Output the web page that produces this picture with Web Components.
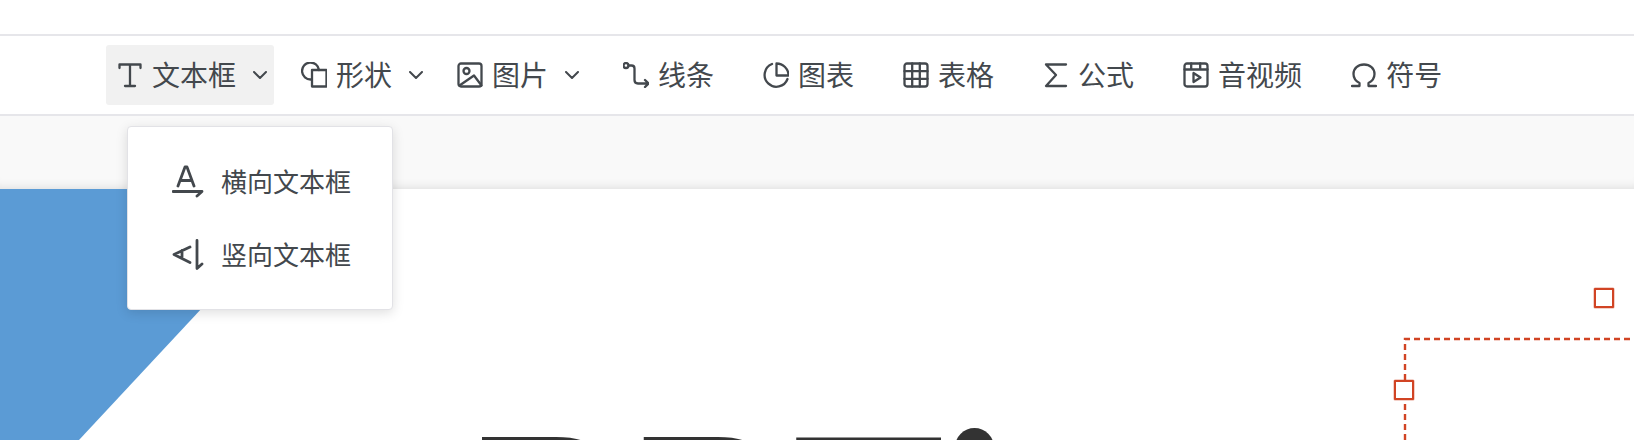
<!DOCTYPE html>
<html lang="zh">
<head>
<meta charset="utf-8">
<title>PPT</title>
<style>
  html, body { margin: 0; height: 100%; overflow: hidden; background: #fff; }
</style>
</head>
<body>
<ppt-app></ppt-app>
<script>
const ICONS = {
  text: '<path d="M2.500 6V2.500h21V6M13 2.500v21M8 24h10"/>',
  shape: '<path d="M10 17.500A8.500 8.500 0 1 1 18 8"/><rect x="11" y="8" width="14.500" height="16.500"/>',
  image: '<rect x="1.500" y="1.500" width="23" height="23" rx="2.500"/><circle cx="9.500" cy="9" r="3"/><path d="M2.500 23.500 17 13.500l7.500 10"/>',
  line: '<circle cx="3" cy="3.500" r="2.500"/><path d="M5.500 3.500h3c2 0 3 1 3 3V18c0 2 1.500 3.500 3.500 3.500H25M22 18l3.500 3.500-3.500 3.500"/>',
  chart: '<path d="M9 2A11.800 11.800 0 1 0 24.500 17"/><path d="M13.500 1.500A12 12 0 0 1 25.500 13.500H13.500z"/>',
  table: '<rect x="1.500" y="1.500" width="23" height="23" rx="2.500"/><path d="M1.500 9.200h23M1.500 16.800h23M9.200 1.500v23M16.800 1.500v23"/>',
  sigma: '<path d="M23 2.500H3L13 13 3 24h20"/>',
  video: '<rect x="1.500" y="1.500" width="23" height="23" rx="2.500"/><path d="M1.500 7.500h23M8.200 1.500v6M17.200 1.500v6"/><path d="M10.500 11v9l7-4.500z"/>',
  omega: '<path d="M1 24h7.500v-3C4.500 19 2.500 15.500 2.500 12 2.500 6.500 7 2.500 13 2.500s10.500 4 10.500 9.500c0 3.500-2 7-6 9v3H25"/>',
  chevron: '<path d="M1 1l6 6 6-6"/>',
  horizontal: '<path d="M6 21 13 2h2l7 19M8.500 15.500h11M1 26.500h29l-5 4.500"/>',
  vertical: '<path d="M18 9 2 16.500l16 8M10 12.500v8M25 2.500v28l5-4.500"/>'
};

function iconSvg(name, w, h, stroke) {
  return `<svg xmlns="http://www.w3.org/2000/svg" width="${w}" height="${h}" viewBox="0 0 ${w} ${h}" fill="none" stroke="currentColor" stroke-width="${stroke}" stroke-linecap="round" stroke-linejoin="round">${ICONS[name]}</svg>`;
}

class ToolItem extends HTMLElement {
  connectedCallback() {
    const root = this.attachShadow({ mode: 'open' });
    const hasMenu = this.hasAttribute('dropdown');
    root.innerHTML = `
      <style>
        :host {
          display: flex;
          align-items: center;
          height: 60px;
          padding: 0 ${hasMenu ? 7 : 22}px 0 11px;
          border-radius: 3px;
          color: #43484d;
          cursor: pointer;
        }
        :host([active]) { background: #f1f1f1; }
        .icon { width: 26px; height: 26px; margin-right: 9px; flex: none; }
        svg { display: block; }
        .label { font-size: 28px; line-height: 58px; padding-bottom: 2px; white-space: nowrap; }
        .chevron { margin-left: 17px; flex: none; }
      </style>
      <span class="icon">${iconSvg(this.getAttribute('icon'), 26, 26, 2.3)}</span>
      <span class="label"><slot></slot></span>
      ${hasMenu ? `<span class="chevron"><svg xmlns="http://www.w3.org/2000/svg" width="14" height="8" viewBox="0 0 14 8" fill="none" stroke="currentColor" stroke-width="2" stroke-linecap="round" stroke-linejoin="round">${ICONS.chevron}</svg></span>` : ''}
    `;
  }
}

class MainToolbar extends HTMLElement {
  connectedCallback() {
    const root = this.attachShadow({ mode: 'open' });
    root.innerHTML = `
      <style>
        :host {
          display: flex;
          align-items: center;
          gap: 16px;
          height: 78px;
          padding-left: 106px;
          background: #fff;
          border-top: 2px solid #e6e6ea;
          border-bottom: 2px solid #e6e6ea;
        }
      </style>
      <slot></slot>
    `;
  }
}

class MenuRow extends HTMLElement {
  connectedCallback() {
    const root = this.attachShadow({ mode: 'open' });
    root.innerHTML = `
      <style>
        :host {
          display: flex;
          align-items: center;
          height: 73px;
          padding-left: 44px;
          color: #43484d;
          cursor: pointer;
        }
        svg { display: block; margin-right: 15px; flex: none; }
        .label { font-size: 26px; padding-bottom: 2px; white-space: nowrap; }
      </style>
      ${iconSvg(this.getAttribute('icon'), 34, 34, 2.8)}
      <span class="label"><slot></slot></span>
    `;
  }
}

class DropMenu extends HTMLElement {
  connectedCallback() {
    const root = this.attachShadow({ mode: 'open' });
    root.innerHTML = `
      <style>
        :host {
          position: absolute;
          left: 127px;
          top: 126px;
          z-index: 5;
          box-sizing: border-box;
          width: 266px;
          padding: 18px 0;
          background: #fff;
          border: 1px solid #e2e2e6;
          border-radius: 4px;
          box-shadow: 0 3px 12px rgba(0, 0, 0, .13);
        }
      </style>
      <slot></slot>
    `;
  }
}

class SelectionFrame extends HTMLElement {
  connectedCallback() {
    const root = this.attachShadow({ mode: 'open' });
    root.innerHTML = `
      <style>
        :host {
          position: absolute;
          left: 0;
          top: 0;
          width: 100%;
          height: 100%;
          pointer-events: none;
        }
        svg { position: absolute; left: 0; top: 0; }
        .handle {
          position: absolute;
          box-sizing: border-box;
          width: 20px;
          height: 20px;
          background: #fff;
          border: 2px solid #d14424;
          border-radius: 1px;
          box-shadow: 0 0 0 .5px rgba(209, 68, 36, .5);
        }
      </style>
      <svg xmlns="http://www.w3.org/2000/svg" width="1634" height="251" viewBox="0 0 1634 251" fill="none" stroke="#d14424" stroke-width="2.400" stroke-dasharray="6 4">
        <path d="M1405 251V150H1634"/>
      </svg>
      <div class="handle" style="left:1394px;top:191px"></div>
      <div class="handle" style="left:1594px;top:99px"></div>
    `;
  }
}

class SlideCanvas extends HTMLElement {
  connectedCallback() {
    const root = this.attachShadow({ mode: 'open' });
    root.innerHTML = `
      <style>
        :host {
          display: block;
          position: relative;
          flex: 1;
          overflow: hidden;
          background: #fff;
        }
        .shape {
          position: absolute;
          left: 0;
          top: 0;
          width: 313px;
          height: 251px;
          background: #5b9bd5;
          clip-path: polygon(0 0, 100% 0, 79px 100%, 0 100%);
        }
        .title {
          position: absolute;
          left: 461px;
          top: 208px;
          font-family: "Liberation Sans", sans-serif;
          font-size: 256px;
          line-height: 1;
          color: #333;
          white-space: nowrap;
        }
        .title span { letter-spacing: -9px; }
        .title span + span { letter-spacing: -3px; }
        .dot {
          position: absolute;
          left: 955px;
          top: 239px;
          width: 39px;
          height: 39px;
          border-radius: 50%;
          background: #333;
        }
      </style>
      <div class="shape"></div>
      <div class="title"><span>P</span><span>P</span>T</div>
      <div class="dot"></div>
      <selection-frame></selection-frame>
    `;
  }
}

class PptApp extends HTMLElement {
  connectedCallback() {
    const root = this.attachShadow({ mode: 'open' });
    root.innerHTML = `
      <style>
        :host {
          display: flex;
          flex-direction: column;
          position: relative;
          height: 440px;
          overflow: hidden;
          background: #fff;
          font-family: "Noto Sans CJK SC", "Liberation Sans", sans-serif;
        }
        .top { height: 34px; flex: none; }
        .sub {
          height: 73px;
          flex: none;
          background: #f9f9f9;
          box-shadow: inset 0 -10px 10px -8px rgba(0, 0, 0, .1);
        }
        .line-item { margin-left: 10px; }
      </style>
      <div class="top"></div>
      <main-toolbar>
        <tool-item icon="text" dropdown active>文本框</tool-item>
        <tool-item icon="shape" dropdown>形状</tool-item>
        <tool-item icon="image" dropdown>图片</tool-item>
        <tool-item class="line-item" icon="line">线条</tool-item>
        <tool-item icon="chart">图表</tool-item>
        <tool-item icon="table">表格</tool-item>
        <tool-item icon="sigma">公式</tool-item>
        <tool-item icon="video">音视频</tool-item>
        <tool-item icon="omega">符号</tool-item>
      </main-toolbar>
      <div class="sub"></div>
      <slide-canvas></slide-canvas>
      <drop-menu>
        <menu-row icon="horizontal">横向文本框</menu-row>
        <menu-row icon="vertical">竖向文本框</menu-row>
      </drop-menu>
    `;
  }
}

customElements.define('tool-item', ToolItem);
customElements.define('main-toolbar', MainToolbar);
customElements.define('menu-row', MenuRow);
customElements.define('drop-menu', DropMenu);
customElements.define('selection-frame', SelectionFrame);
customElements.define('slide-canvas', SlideCanvas);
customElements.define('ppt-app', PptApp);
</script>
</body>
</html>
